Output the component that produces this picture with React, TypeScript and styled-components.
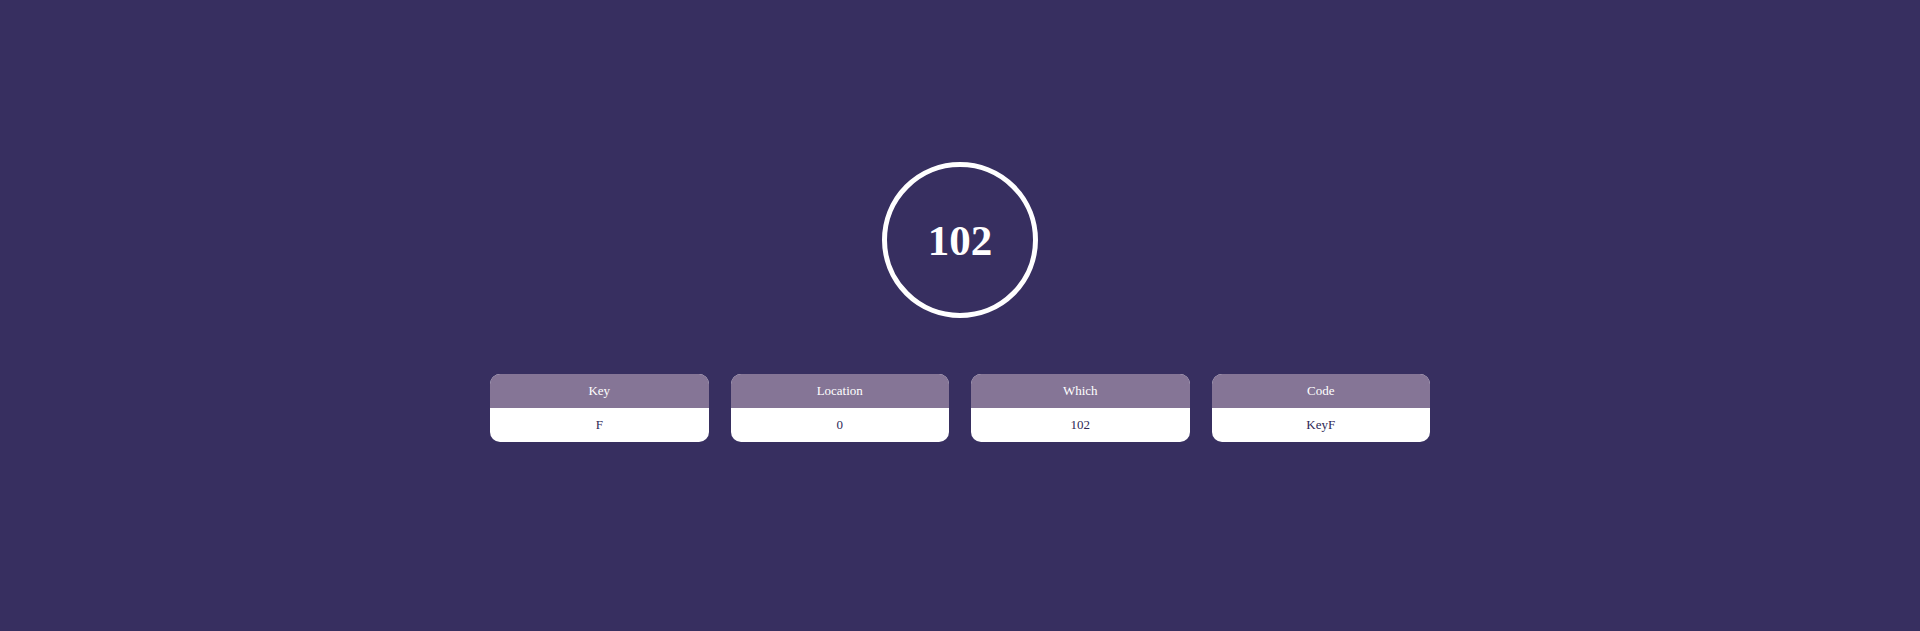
import React from "react";
import styled, { createGlobalStyle } from "styled-components";

const Global = createGlobalStyle`
  html, body { margin: 0; padding: 0; }
  body {
    background: #372f60;
    font-family: "Liberation Serif", "Times New Roman", serif;
  }
`;

const Page = styled.main`
  min-height: 631px;
  box-sizing: border-box;
  padding-top: 162px;
  display: flex;
  flex-direction: column;
  align-items: center;
`;

const Circle = styled.div`
  width: 156px;
  height: 156px;
  box-sizing: border-box;
  border: 5px solid #ffffff;
  border-radius: 50%;
  display: flex;
  align-items: center;
  justify-content: center;
  color: #ffffff;
  font-size: 43px;
  font-weight: 700;
  line-height: 1;
`;

const Cards = styled.div`
  margin-top: 56px;
  width: 940px;
  display: flex;
  gap: 22px;
`;

const Card = styled.div`
  flex: 1;
  border-radius: 10px;
  overflow: hidden;
  background: #ffffff;
  font-size: 13px;
`;

const CardHead = styled.div`
  height: 34px;
  background: #857596;
  color: #ffffff;
  display: flex;
  align-items: center;
  justify-content: center;
`;

const CardBody = styled.div`
  height: 34px;
  color: #2e2856;
  display: flex;
  align-items: center;
  justify-content: center;
`;

const items = [
  { label: "Key", value: "F" },
  { label: "Location", value: "0" },
  { label: "Which", value: "102" },
  { label: "Code", value: "KeyF" },
];

export default function App() {
  return (
    <>
      <Global />
      <Page>
        <Circle>102</Circle>
        <Cards>
          {items.map((it) => (
            <Card key={it.label}>
              <CardHead>{it.label}</CardHead>
              <CardBody>{it.value}</CardBody>
            </Card>
          ))}
        </Cards>
      </Page>
    </>
  );
}
